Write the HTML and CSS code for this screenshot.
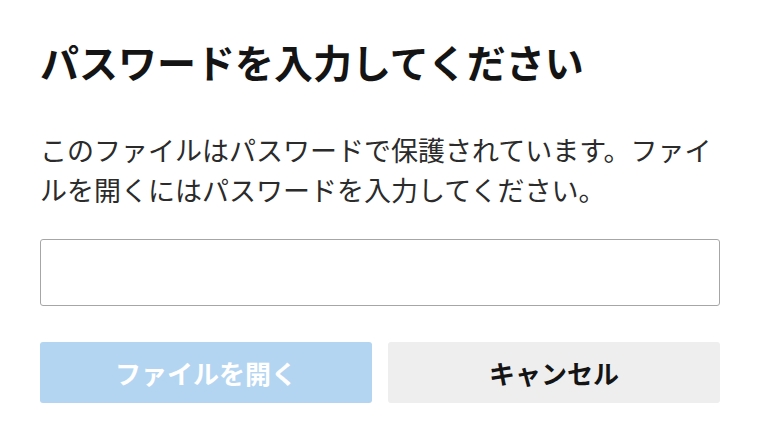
FILE: index.html
```html
<!DOCTYPE html>
<html lang="ja">
<head>
<meta charset="utf-8">
<link rel="stylesheet" href="styles.css">
</head>
<body>
<div class="dialog">
  <h1 class="title">パスワードを入力してください</h1>
  <p class="message">このファイルはパスワードで保護されています。ファイルを開くにはパスワードを入力してください。</p>
  <input class="password" type="password">
  <div class="actions">
    <button class="btn btn-primary" disabled>ファイルを開く</button>
    <button class="btn btn-secondary">キャンセル</button>
  </div>
</div>
</body>
</html>
```
FILE: styles.css
```css
html, body {
  margin: 0;
  padding: 0;
  background: #ffffff;
}
body {
  font-family: "Noto Sans CJK JP", "Noto Sans", sans-serif;
}
.dialog {
  width: 680px;
  padding: 38px 40px 0 40px;
  display: flex;
  flex-direction: column;
}
.title {
  margin: 0;
  font-size: 39px;
  line-height: 47px;
  font-weight: 700;
  color: #141414;
}
.message {
  margin: 45px 0 0 0;
  font-size: 27px;
  line-height: 40px;
  font-weight: 400;
  color: #2b2b2b;
}
.password {
  margin: 29px 0 0 0;
  box-sizing: border-box;
  width: 680px;
  height: 67px;
  border: 1px solid #a6a6a6;
  border-radius: 3px;
  padding: 0 12px;
  font-size: 24px;
  background: #fff;
  outline: none;
}
.actions {
  margin-top: 36px;
  display: grid;
  grid-template-columns: 1fr 1fr;
  gap: 16px;
}
.btn {
  height: 61px;
  border: none;
  border-radius: 3px;
  font-family: "Noto Sans CJK JP", "Noto Sans", sans-serif;
  font-size: 26px;
  font-weight: 700;
  padding: 0;
}
.btn-primary {
  background: #b3d5f1;
  color: #ffffff;
}
.btn-secondary {
  background: #eeeeee;
  color: #141414;
}
```
